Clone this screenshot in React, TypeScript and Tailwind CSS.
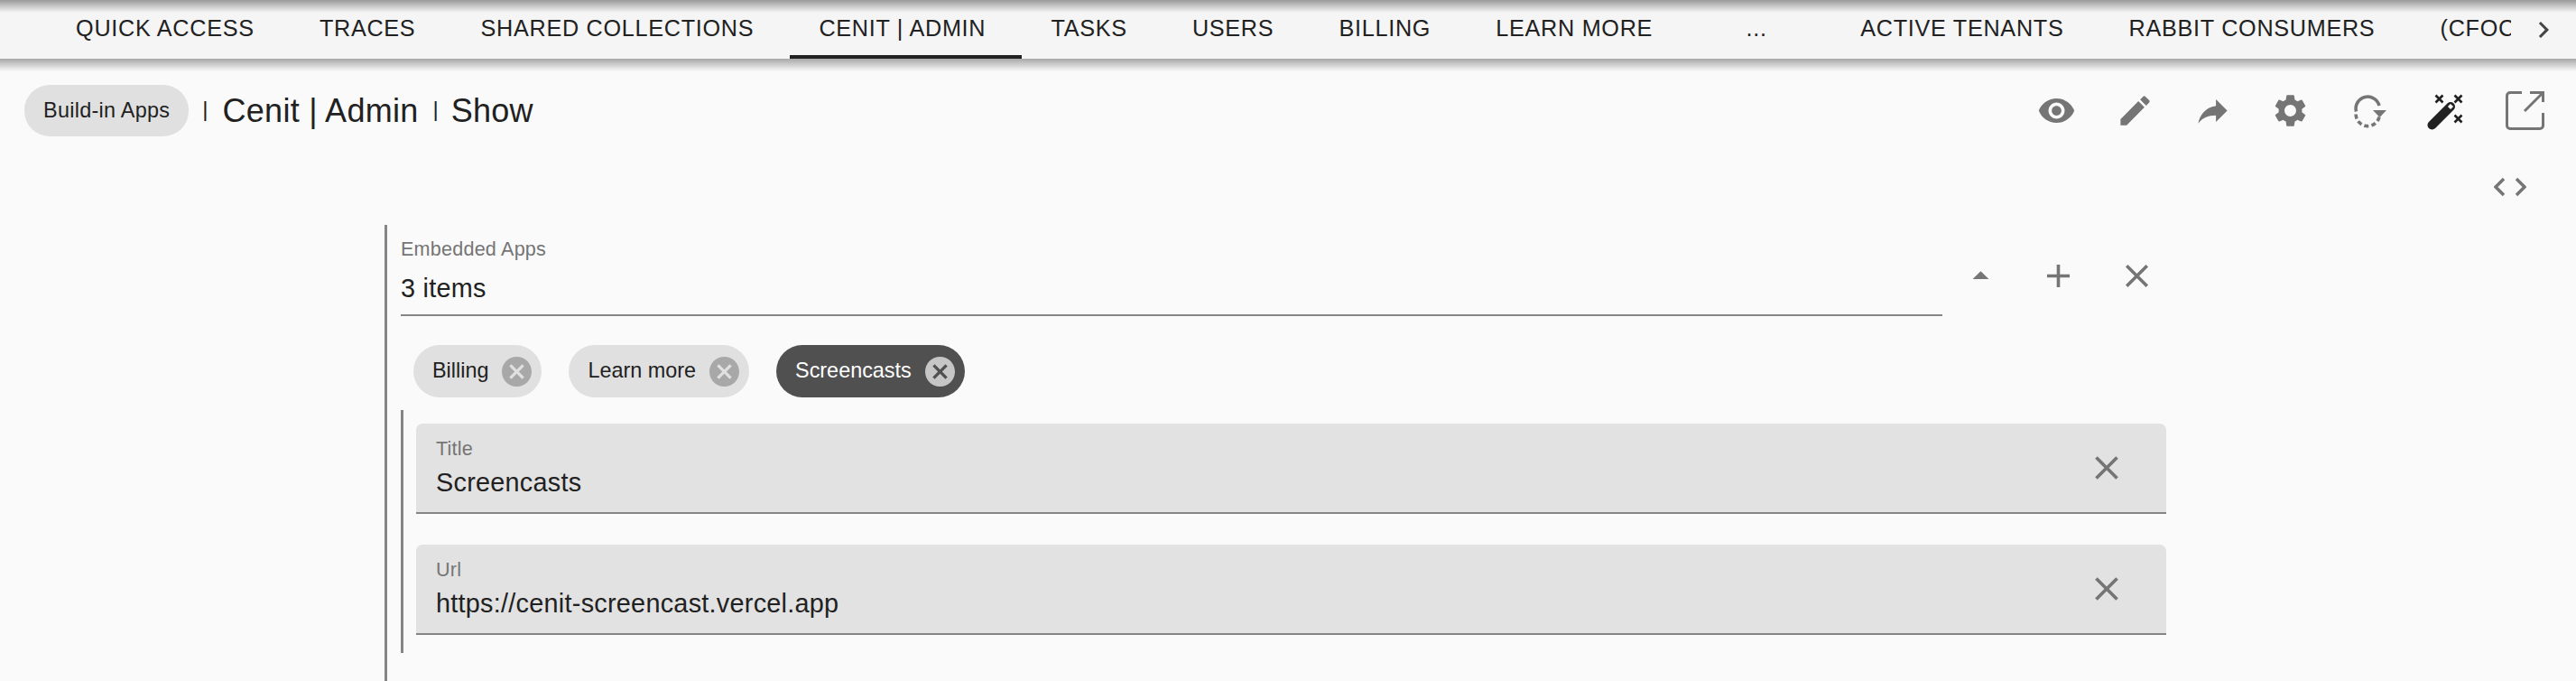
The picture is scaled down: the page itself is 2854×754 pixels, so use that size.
import React from "react";

const font = "font-['Liberation_Sans',Arial,sans-serif]";

const tabs: { t: string; active?: boolean; wide?: boolean }[] = [
  { t: "QUICK ACCESS" },
  { t: "TRACES" },
  { t: "SHARED COLLECTIONS" },
  { t: "CENIT | ADMIN", active: true },
  { t: "TASKS" },
  { t: "USERS" },
  { t: "BILLING" },
  { t: "LEARN MORE" },
  { t: "...", wide: true },
  { t: "ACTIVE TENANTS" },
  { t: "RABBIT CONSUMERS" },
  { t: "(CFOCUS)" },
];

function Ic({ d, size = 43, color = "#757575" }: { d: string; size?: number; color?: string }) {
  return (
    <svg width={size} height={size} viewBox="0 0 24 24" fill={color} className="shrink-0">
      <path d={d} />
    </svg>
  );
}

const CLOSE = "M19 6.41 17.59 5 12 10.59 6.41 5 5 6.41 10.59 12 5 17.59 6.41 19 12 13.41 17.59 19 19 17.59 13.41 12z";

function Chip({ label, active }: { label: string; active?: boolean }) {
  return (
    <div className={`flex h-[58px] items-center rounded-[29px] pl-[21px] pr-[11px] ${active ? "bg-[#505050] text-white" : "bg-[#e0e0e0] text-[#212121]"}`}>
      <span className="text-[23.4px] leading-none">{label}</span>
      <svg width="33" height="33" viewBox="2 2 20 20" className="ml-[15px] shrink-0" fill={active ? "#c6c6c6" : "#a8a8a8"}>
        <path d="M12 2C6.47 2 2 6.47 2 12s4.47 10 10 10 10-4.47 10-10S17.53 2 12 2zm5 13.59L15.59 17 12 13.41 8.41 17 7 15.59 10.59 12 7 8.41 8.41 7 12 10.59 15.59 7 17 8.41 13.41 12 17 15.59z" />
      </svg>
    </div>
  );
}

function Field({ label, value }: { label: string; value: string }) {
  return (
    <div className="flex h-[100px] items-center rounded-t-[7px] border-b-2 border-[#858585] bg-[#e2e2e2] pl-[22px] pr-[44px]">
      <div className="flex-1">
        <div className="text-[21.6px] leading-[24px] tracking-[0.2px] text-[#757575]">{label}</div>
        <div className="mt-[8px] text-[28.8px] leading-[34px] tracking-[0.27px] text-[#212121]">{value}</div>
      </div>
      <Ic d={CLOSE} size={44} />
    </div>
  );
}

function RefreshIcon() {
  return (
    <svg width="43" height="43" viewBox="0 0 43 43" fill="none" className="shrink-0">
      <path d="M7.5 22.5A13 13 0 0 1 33 16" stroke="#757575" strokeWidth="3.6" />
      <path d="M33 28.5A13 13 0 0 1 7.5 22.5" stroke="#757575" strokeWidth="3.6" strokeDasharray="5 3.2" />
      <path d="M26 21h15l-7.5 8z" fill="#757575" />
    </svg>
  );
}

function WandIcon() {
  return (
    <svg width="43" height="43" viewBox="0 0 43 43" fill="none" className="shrink-0">
      <path d="M5.5 37.5 26 17" stroke="#212121" strokeWidth="10" strokeLinecap="round" />
      <path d="M24.5 18.5 27.5 15.5" stroke="#fafafa" strokeWidth="4.5" />
      <g stroke="#212121" strokeWidth="2.6">
        <path d="M9.5 4.5l8 8m0-8-8 8" />
        <path d="M30.5 4.5l8 8m0-8-8 8" />
        <path d="M30.5 26.5l8 8m0-8-8 8" />
      </g>
    </svg>
  );
}

function OpenIcon() {
  return (
    <svg width="43" height="43" viewBox="0 0 43 43" fill="none" stroke="#757575" strokeWidth="3" className="shrink-0">
      <path d="M18 1.5H5A3.5 3.5 0 0 0 1.500 5v33A3.500 3.500 0 0 0 5 41.500h33a3.500 3.500 0 0 0 3.500-3.500V24" />
      <path d="M27 1.500h14.500V12M41 2 21 22" />
    </svg>
  );
}

export default function App() {
  return (
    <div className={`${font} h-[754px] w-[2854px] overflow-hidden bg-[#fafafa]`}>
      <header className="relative flex h-[65px] items-stretch overflow-hidden bg-[#f5f5f5]">
        <div className="pointer-events-none absolute inset-x-0 top-0 h-[14px] bg-gradient-to-b from-[#9a9a9a] to-transparent" />
        <div className="flex min-w-0 flex-1 overflow-hidden pl-[48px]">
          {tabs.map(({ t, active, wide }) => (
            <div
              key={t}
              className={`relative flex shrink-0 items-center justify-center pb-[2px] text-[25.2px] tracking-[0.72px] text-[#212121] ${wide ? "w-[158px]" : "px-[36.100px]"}`}
            >
              {t}
              {active && <span className="absolute bottom-0 left-[4px] right-[-4px] h-[4px] bg-[#212121]" />}
            </div>
          ))}
        </div>
        <div className="flex w-[72px] shrink-0 items-center justify-center">
          <Ic d="M10 6 8.590 7.410 13.170 12l-4.580 4.590L10 18l6-6z" size={36} color="#444" />
        </div>
      </header>
      <div className="h-[14px] bg-gradient-to-b from-[#a8a8a8] to-[#fafafa]" />

      <div className="mt-[15px] flex h-[57px] items-center justify-between pl-[27px] pr-[35.500px]">
        <div className="flex items-center">
          <div className="flex h-[57px] items-center rounded-[28px] bg-[#e0e0e0] px-[21px] text-[23.4px] tracking-[0.29px] text-[#212121]">Build-in Apps</div>
          <span className="mb-[4px] ml-[15px] text-[24px] text-[#212121]">|</span>
          <span className="ml-[16px] text-[36px] tracking-[0.27px] text-[#212121]">Cenit | Admin</span>
          <span className="mb-[4px] ml-[16px] text-[24px] text-[#212121]">|</span>
          <span className="ml-[14px] text-[36px] tracking-[0.27px] text-[#212121]">Show</span>
        </div>
        <div className="flex items-center gap-[43.400px]">
          <Ic d="M12 4.500C7 4.500 2.730 7.610 1 12c1.730 4.390 6 7.500 11 7.500s9.270-3.110 11-7.500c-1.730-4.390-6-7.500-11-7.500zM12 17c-2.760 0-5-2.240-5-5s2.240-5 5-5 5 2.240 5 5-2.240 5-5 5zm0-8c-1.660 0-3 1.340-3 3s1.340 3 3 3 3-1.340 3-3-1.340-3-3-3z" />
          <Ic d="M3 17.250V21h3.750L17.810 9.940l-3.750-3.750L3 17.250zM20.710 7.040c.39-.39.39-1.020 0-1.410l-2.340-2.340c-.39-.39-1.020-.39-1.410 0l-1.830 1.830 3.750 3.750 1.830-1.830z" />
          <Ic d="M14 9V5l7 7-7 7v-4.100c-5 0-8.500 1.600-11 5.100 1-5 4-10 11-11z" />
          <Ic d="M19.140 12.940c.04-.3.06-.61.06-.94 0-.32-.02-.64-.07-.94l2.030-1.580c.18-.14.23-.41.12-.61l-1.920-3.320c-.12-.22-.37-.29-.59-.22l-2.390.96c-.5-.38-1.030-.7-1.620-.94l-.36-2.540c-.04-.24-.24-.41-.48-.41h-3.840c-.24 0-.43.17-.47.41l-.36 2.540c-.59.24-1.130.57-1.620.94l-2.390-.96c-.22-.08-.47 0-.59.22L2.740 8.870c-.12.21-.08.47.12.61l2.030 1.580c-.05.3-.09.63-.09.94s.02.64.07.94l-2.030 1.580c-.18.14-.23.41-.12.61l1.920 3.320c.12.22.37.29.59.22l2.390-.96c.5.38 1.030.7 1.620.94l.36 2.540c.05.24.24.41.48.41h3.840c.24 0 .44-.17.47-.41l.36-2.540c.59-.24 1.130-.56 1.620-.94l2.390.96c.22.08.47 0 .59-.22l1.920-3.320c.12-.22.07-.47-.12-.61l-2.010-1.580zM12 15.600c-1.980 0-3.600-1.620-3.600-3.600s1.620-3.600 3.600-3.600 3.600 1.620 3.600 3.600-1.620 3.600-3.600 3.600z" />
          <RefreshIcon />
          <WandIcon />
          <OpenIcon />
        </div>
      </div>

      <div className="mt-[45px] flex justify-end pr-[55px]">
        <svg width="36" height="22" viewBox="0 0 36 22" fill="none" stroke="#757575" strokeWidth="3.500" className="shrink-0">
          <path d="M11 2 2 11l9 9M25 2l9 9-9 9" />
        </svg>
      </div>

      <div className="ml-[426px] mr-[454px] mt-[31px] h-[600px] border-l-[3px] border-[#858585] pl-[15px]">
        <div className="flex items-start">
          <div className="w-[1708px] shrink-0 border-b-2 border-[#858585] pb-[12px] pt-[15px]">
            <div className="text-[21.6px] leading-[24px] tracking-[0.2px] text-[#757575]">Embedded Apps</div>
            <div className="mt-[14px] text-[28.8px] leading-[34px] tracking-[0.27px] text-[#212121]">3 items</div>
          </div>
          <div className="ml-[21px] mt-[35px] flex items-center gap-[43.400px]">
            <Ic d="m7 14 5-5 5 5z" />
            <Ic d="M19 13h-6v6h-2v-6H5v-2h6V5h2v6h6v2z" />
            <Ic d={CLOSE} />
          </div>
        </div>
        <div className="mt-[32px] flex gap-[30px] pl-[14px]">
          <Chip label="Billing" />
          <Chip label="Learn more" />
          <Chip label="Screencasts" active />
        </div>
        <div className="mt-[14px] flex flex-col gap-[34px] border-l-[3px] border-[#858585] pb-[20px] pl-[14px] pt-[15px]">
          <Field label="Title" value="Screencasts" />
          <Field label="Url" value="https://cenit-screencast.vercel.app" />
        </div>
      </div>
    </div>
  );
}
